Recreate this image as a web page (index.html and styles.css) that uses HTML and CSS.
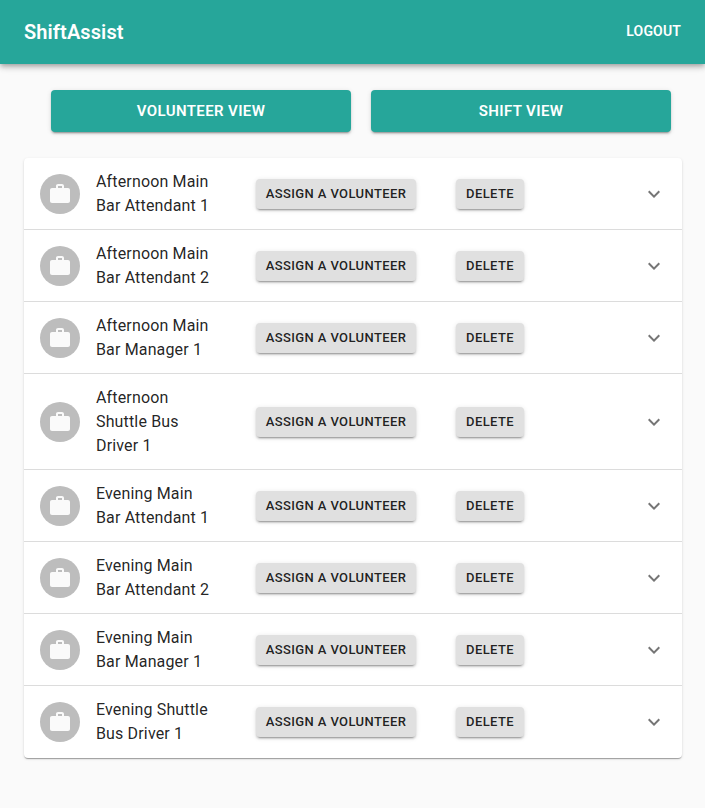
FILE: index.html
```html
<!DOCTYPE html>
<html lang="en">
<head>
<meta charset="utf-8">
<title>ShiftAssist</title>
<link rel="stylesheet" href="styles.css">
</head>
<body>
<svg width="0" height="0" class="defs">
  <symbol id="work" viewBox="0 0 24 24"><path d="M20 6h-4V4c0-1.11-.89-2-2-2h-4c-1.11 0-2 .89-2 2v2H4c-1.11 0-1.99.89-1.99 2L2 19c0 1.11.89 2 2 2h16c1.11 0 2-.89 2-2V8c0-1.11-.89-2-2-2zm-6 0h-4V4h4v2z"/></symbol>
  <symbol id="more" viewBox="0 0 24 24"><path d="M16.59 8.59L12 13.17 7.41 8.59 6 10l6 6 6-6z"/></symbol>
</svg>
<header class="appbar"><h1>ShiftAssist</h1><a class="logout">LOGOUT</a></header>
<nav class="views"><button class="view">VOLUNTEER VIEW</button><button class="view">SHIFT VIEW</button></nav>
<main class="list">
  <div class="row"><span class="avatar"><svg><use href="#work"/></svg></span><p class="name">Afternoon Main Bar Attendant 1</p><button class="btn">ASSIGN A VOLUNTEER</button><button class="btn">DELETE</button><svg class="chevron"><use href="#more"/></svg></div>
  <div class="row"><span class="avatar"><svg><use href="#work"/></svg></span><p class="name">Afternoon Main Bar Attendant 2</p><button class="btn">ASSIGN A VOLUNTEER</button><button class="btn">DELETE</button><svg class="chevron"><use href="#more"/></svg></div>
  <div class="row"><span class="avatar"><svg><use href="#work"/></svg></span><p class="name">Afternoon Main Bar Manager 1</p><button class="btn">ASSIGN A VOLUNTEER</button><button class="btn">DELETE</button><svg class="chevron"><use href="#more"/></svg></div>
  <div class="row"><span class="avatar"><svg><use href="#work"/></svg></span><p class="name">Afternoon Shuttle Bus Driver 1</p><button class="btn">ASSIGN A VOLUNTEER</button><button class="btn">DELETE</button><svg class="chevron"><use href="#more"/></svg></div>
  <div class="row"><span class="avatar"><svg><use href="#work"/></svg></span><p class="name">Evening Main Bar Attendant 1</p><button class="btn">ASSIGN A VOLUNTEER</button><button class="btn">DELETE</button><svg class="chevron"><use href="#more"/></svg></div>
  <div class="row"><span class="avatar"><svg><use href="#work"/></svg></span><p class="name">Evening Main Bar Attendant 2</p><button class="btn">ASSIGN A VOLUNTEER</button><button class="btn">DELETE</button><svg class="chevron"><use href="#more"/></svg></div>
  <div class="row"><span class="avatar"><svg><use href="#work"/></svg></span><p class="name">Evening Main Bar Manager 1</p><button class="btn">ASSIGN A VOLUNTEER</button><button class="btn">DELETE</button><svg class="chevron"><use href="#more"/></svg></div>
  <div class="row"><span class="avatar"><svg><use href="#work"/></svg></span><p class="name">Evening Shuttle Bus Driver 1</p><button class="btn">ASSIGN A VOLUNTEER</button><button class="btn">DELETE</button><svg class="chevron"><use href="#more"/></svg></div>
</main>
</body>
</html>
```
FILE: styles.css
```css
* { box-sizing: border-box; }
body { margin: 0; min-height: 100vh; background: #fafafa; font-family: Roboto, sans-serif; color: rgba(0,0,0,.87); }
.defs { display: none; }
.appbar {
  display: flex; align-items: center; justify-content: space-between;
  height: 64px; padding: 0 24px; background: #26a69a; color: #fff;
  box-shadow: 0 2px 4px -1px rgba(0,0,0,.2), 0 4px 5px 0 rgba(0,0,0,.14), 0 1px 10px 0 rgba(0,0,0,.12);
}
.appbar h1 { margin: 0; font-size: 20px; font-weight: 600; line-height: 32px; letter-spacing: .1px; }
.logout { padding-bottom: 2px; font-size: 14px; font-weight: 600; line-height: 24px; letter-spacing: .15px; }
button { border: 0; margin: 0; font-family: inherit; font-weight: 500; border-radius: 4px; white-space: nowrap;
  box-shadow: 0 3px 1px -2px rgba(0,0,0,.2), 0 2px 2px 0 rgba(0,0,0,.14), 0 1px 5px 0 rgba(0,0,0,.12); }
.views { display: flex; gap: 20px; margin: 26px 34px 26px 51px; }
.view { width: 300px; height: 42px; padding: 0; background: #26a69a; color: #fff; font-size: 15px; font-weight: 600; letter-spacing: .38px; }
.list { width: 658px; margin-left: 24px; background: #fff; border-radius: 4px;
  box-shadow: 0 2px 1px -1px rgba(0,0,0,.2), 0 1px 1px 0 rgba(0,0,0,.14), 0 1px 3px 0 rgba(0,0,0,.12); }
.row { display: grid; grid-template-columns: 56px 120px 40px 160px 40px 68px 1fr; align-items: center; padding: 12px 16px 11px; border-bottom: 1px solid #dcdcdc; }
.row:last-child { padding-bottom: 12px; border-bottom: 0; }
.avatar { width: 40px; height: 40px; border-radius: 50%; background: #bdbdbd; display: flex; align-items: center; justify-content: center; }
.avatar svg { width: 24px; height: 24px; fill: #fafafa; }
.name { margin: 0; font-size: 16px; line-height: 24px; letter-spacing: .15px; }
.btn { height: 30px; padding: 0 0 2px; background: #e0e0e0; color: rgba(0,0,0,.87); font-size: 13px; font-weight: 500; letter-spacing: .39px; grid-column: 4; }
.btn + .btn { grid-column: 6; }
.chevron { width: 24px; height: 24px; fill: rgba(0,0,0,.54); justify-self: end; grid-column: 7; }
```
